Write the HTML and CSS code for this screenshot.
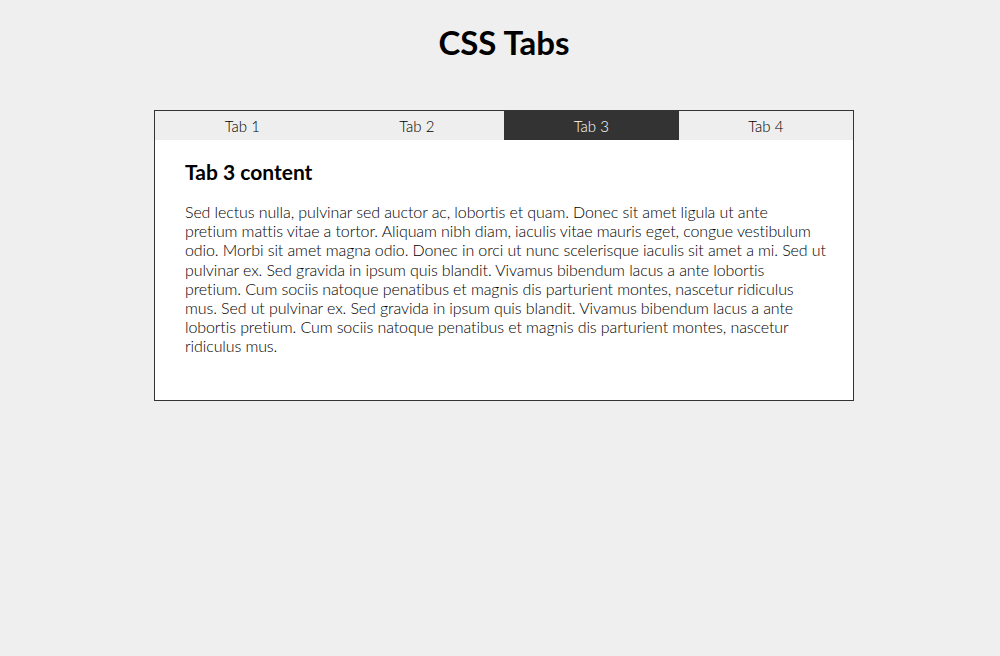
FILE: index.html
```html
<!DOCTYPE html>
<html>
<head>
<meta charset="utf-8">
<link rel="stylesheet" href="styles.css">
</head>
<body>
<h1 class="title">CSS Tabs</h1>
<div class="tabs">
  <div class="tab-bar">
    <div class="tab">Tab 1</div>
    <div class="tab">Tab 2</div>
    <div class="tab active">Tab 3</div>
    <div class="tab">Tab 4</div>
  </div>
  <div class="panel">
    <h2 class="panel-title">Tab 3 content</h2>
    <p class="panel-text">Sed lectus nulla, pulvinar sed auctor ac, lobortis et quam. Donec sit amet ligula ut ante<br>pretium mattis vitae a tortor. Aliquam nibh diam, iaculis vitae mauris eget, congue vestibulum<br>odio. Morbi sit amet magna odio. Donec in orci ut nunc scelerisque iaculis sit amet a mi. Sed ut<br>pulvinar ex. Sed gravida in ipsum quis blandit. Vivamus bibendum lacus a ante lobortis<br>pretium. Cum sociis natoque penatibus et magnis dis parturient montes, nascetur ridiculus<br>mus. Sed ut pulvinar ex. Sed gravida in ipsum quis blandit. Vivamus bibendum lacus a ante<br>lobortis pretium. Cum sociis natoque penatibus et magnis dis parturient montes, nascetur<br>ridiculus mus.</p>
  </div>
</div>
</body>
</html>
```
FILE: styles.css
```css
html, body {
  margin: 0;
  padding: 0;
}
body {
  background: #efefef;
  font-family: Lato, "Liberation Sans", sans-serif;
  color: #000;
  padding: 23px 0 0 8px;
}
.title {
  margin: 0;
  font-size: 33px;
  line-height: 38px;
  font-weight: 700;
  text-align: center;
}
.tabs {
  width: 698px;
  margin: 49px auto 0;
  border: 1px solid #333;
  background: #fff;
}
.tab-bar {
  display: grid;
  grid-template-columns: repeat(4, 1fr);
  background: #eee;
}
.tab {
  padding-top: 1px;
  line-height: 28px;
  text-align: center;
  font-size: 15px;
  font-weight: 300;
  color: #000;
}
.tab.active {
  background: #333;
  color: #fff;
}
.panel {
  padding: 20px 24px 44px 30px;
}
.panel-title {
  margin: 0 0 18px;
  font-size: 21px;
  line-height: 24px;
  font-weight: 700;
}
.panel-text {
  margin: 0;
  font-size: 16px;
  line-height: 19.2px;
  font-weight: 300;
  letter-spacing: -0.1px;
  color: #000;
}
```
